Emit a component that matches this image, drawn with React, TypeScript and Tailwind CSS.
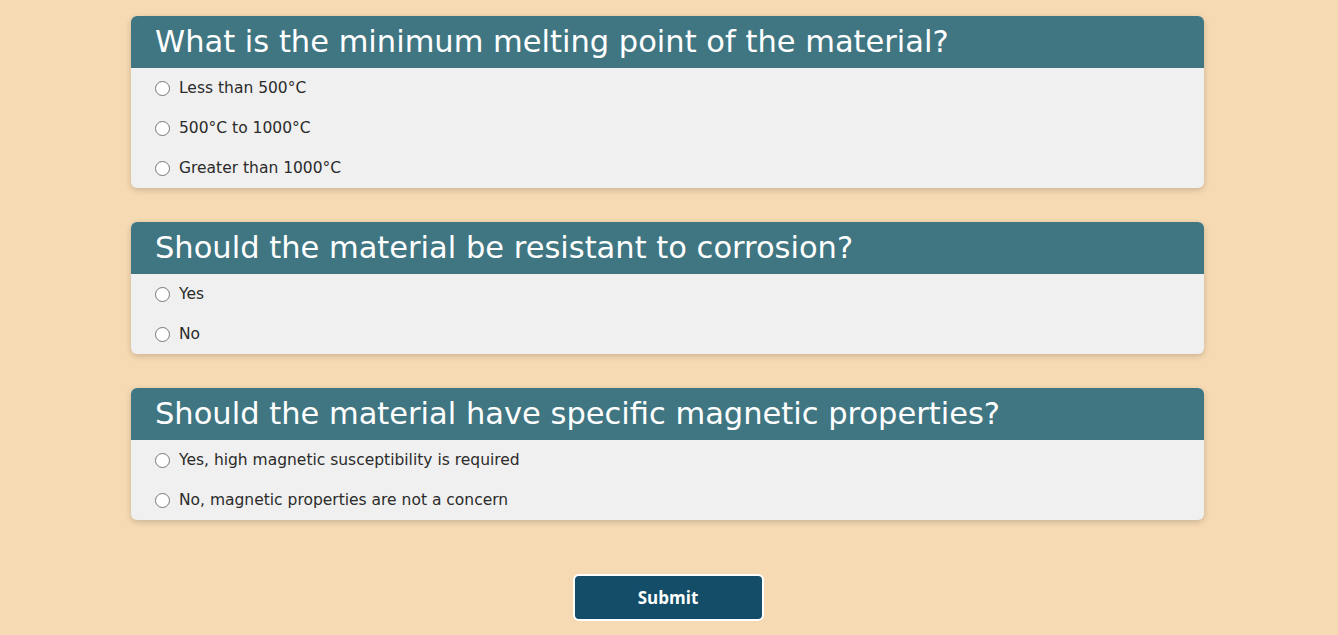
const questions = [
  {
    title: "What is the minimum melting point of the material?",
    options: ["Less than 500°C", "500°C to 1000°C", "Greater than 1000°C"],
  },
  {
    title: "Should the material be resistant to corrosion?",
    options: ["Yes", "No"],
  },
  {
    title: "Should the material have specific magnetic properties?",
    options: ["Yes, high magnetic susceptibility is required", "No, magnetic properties are not a concern"],
  },
];

const App = () => {
  return (
    <div className="min-h-[635px] bg-[#f6dab3] pt-4 font-['DejaVu_Sans',sans-serif]">
      <div className="flex flex-col gap-[34px]">
        {questions.map((q, qi) => (
          <div
            key={qi}
            className="ml-[131px] w-[1073px] overflow-hidden rounded-md bg-[#f0f0f0] shadow-[0_2px_6px_rgba(0,0,0,0.18)]"
          >
            <div className="flex h-[52px] items-center bg-[#3f7682] pl-6 text-[30.5px] text-white">
              {q.title}
            </div>
            <div>
              {q.options.map((opt, oi) => (
                <label key={oi} className="flex h-10 items-center pl-6 text-[15.5px] leading-none text-[#2b2b2b]">
                  <input
                    type="radio"
                    name={`q${qi}`}
                    className="mr-[9px] h-[15px] w-[15px] shrink-0 appearance-none rounded-full border border-[#767676] bg-white checked:border-[4px] checked:border-[#3f7682]"
                  />
                  <span className="pt-[1px]">{opt}</span>
                </label>
              ))}
            </div>
          </div>
        ))}
      </div>
      <div className="mt-[54px] flex justify-center pb-4 pr-[2px]">
        <button className="h-[47px] w-[191px] rounded-md border-2 border-white bg-[#134d67] font-['Open_Sans',sans-serif] text-[17px] font-bold text-white">
          Submit
        </button>
      </div>
    </div>
  );
};

export default App;
